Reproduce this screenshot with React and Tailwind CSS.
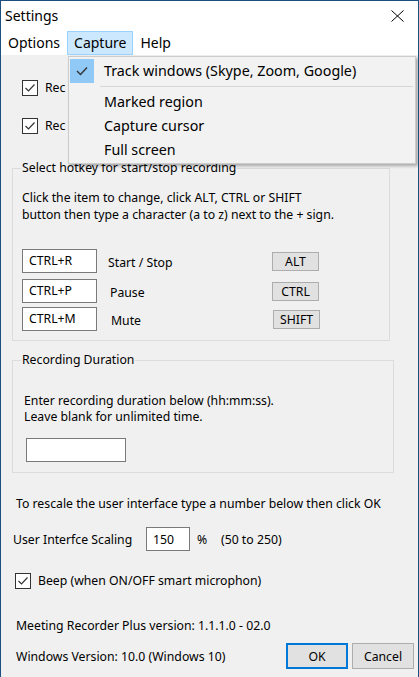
import React from "react";

function Check({ className = "" }) {
  return (
    <div className={"w-[16px] h-[16px] border border-[#333333] bg-white flex items-center justify-center shrink-0 " + className}>
      <svg width="12" height="10" viewBox="0 0 12 10">
        <path d="M1.5 5 L4.5 8 L10.5 1.5" fill="none" stroke="#333333" strokeWidth="1.2" />
      </svg>
    </div>
  );
}

function HotkeyRow({ keyText, label, labelMl, btn, mt }) {
  return (
    <div className={"flex items-center " + mt}>
      <div className="w-[75px] h-[24px] border border-[#7a7a7a] bg-white pl-[6px] pt-[2px] leading-[18px]">{keyText}</div>
      <div className={labelMl + " pt-[3px]"}>{label}</div>
      <div className="w-[47px] h-[19px] border border-[#adadad] bg-[#e1e1e1] flex items-center justify-center">{btn}</div>
    </div>
  );
}

export default function App() {
  return (
    <div className="relative w-[419px] h-[677px] overflow-hidden bg-[#f0f0f0] border-x border-t border-[#1b4f80] text-black font-['Noto_Sans',sans-serif] text-[12.25px] leading-[17px]">
      {/* Title bar */}
      <div className="h-[30px] bg-white flex items-center justify-between pl-[4px] pr-[14px]">
        <span className="text-[14px] leading-[20px]">Settings</span>
        <svg width="13" height="12" viewBox="0 0 13 12">
          <path d="M0.5 0.5 L12.5 11.5 M12.5 0.5 L0.5 11.5" stroke="#000" strokeWidth="1" fill="none" />
        </svg>
      </div>
      {/* Menu bar */}
      <div className="h-[24px] bg-white flex items-stretch text-[14px] leading-[20px] pl-[7px]">
        <div className="flex items-center">Options</div>
        <div className="ml-[7px] px-[6px] border border-[#99d1ff] bg-[#cce8ff] flex items-center">Capture</div>
        <div className="ml-[7px] flex items-center">Help</div>
      </div>

      {/* Body */}
      <div className="flex flex-col">
        <div className="flex items-center ml-[21px] mt-[24px]">
          <Check />
          <span className="ml-[7px]">Rec</span>
        </div>
        <div className="flex items-center ml-[21px] mt-[21px]">
          <Check />
          <span className="ml-[7px]">Rec</span>
        </div>

        <fieldset className="ml-[11px] w-[378px] mt-[26px] border border-[#dcdcdc] pl-[9px] pb-[9px]">
          <legend className="ml-[-1px] px-[1px] leading-[16px]">Select hotkey for start/stop recording</legend>
          <div className="mt-[13px]">
            Click the item to change, click ALT, CTRL or SHIFT
            <br />
            button then type a character (a to z) next to the + sign.
          </div>
          <HotkeyRow keyText="CTRL+R" label="Start / Stop" labelMl="ml-[11px] w-[164px]" btn="ALT" mt="mt-[26px]" />
          <HotkeyRow keyText="CTRL+P" label="Pause" labelMl="ml-[13px] w-[162px]" btn="CTRL" mt="mt-[6px]" />
          <HotkeyRow keyText="CTRL+M" label="Mute" labelMl="ml-[14px] w-[162px]" btn="SHIFT" mt="mt-[4px]" />
        </fieldset>

        <fieldset className="ml-[11px] w-[382px] mt-[11px] border border-[#dcdcdc] pl-[9px] pb-[10px]">
          <legend className="ml-[-1px] px-[1px] leading-[16px]">Recording Duration</legend>
          <div className="mt-[25px] ml-[2px] leading-[16px]">
            Enter recording duration below (hh:mm:ss).
            <br />
            Leave blank for unlimited time.
          </div>
          <div className="mt-[13px] ml-[4px] w-[100px] h-[24px] border border-[#7a7a7a] bg-white" />
        </fieldset>

        <div className="ml-[15px] mt-[22px]">To rescale the user interface type a number below then click OK</div>

        <div className="flex items-center mt-[15px] ml-[12px]">
          <span className="w-[133px]">User Interfce Scaling</span>
          <div className="w-[44px] h-[24px] border border-[#7a7a7a] bg-white pl-[6px] flex items-center">150</div>
          <span className="ml-[7px] w-[24px]">%</span>
          <span>(50 to 250)</span>
        </div>

        <div className="flex items-center mt-[21px] ml-[14px]">
          <Check />
          <span className="ml-[7px]">Beep (when ON/OFF smart microphon)</span>
        </div>

        <div className="ml-[15px] mt-[28px] whitespace-nowrap">Meeting Recorder Plus version: 1.1.1.0 - 02.0</div>

        <div className="flex items-center mt-[9px] ml-[15px]">
          <span className="w-[270px]">Windows Version: 10.0 (Windows 10)</span>
          <div className="w-[62px] h-[26px] border-2 border-[#0078d7] bg-[#e1e1e1] flex items-center justify-center">OK</div>
          <div className="ml-[4px] w-[62px] h-[26px] border border-[#adadad] bg-[#e1e1e1] flex items-center justify-center">Cancel</div>
        </div>
      </div>

      {/* Dropdown menu */}
      <div className="absolute left-[67px] top-[55px] w-[348px] border border-[#cccccc] bg-[#f2f2f2] pt-[2px] pb-[1px] text-[14.3px] leading-[20px] shadow-[2px_2px_3px_rgba(0,0,0,0.3)]">
        <div className="flex items-center h-[24px]">
          <div className="ml-[1px] w-[24px] h-[24px] bg-[#90c8f6] flex items-center justify-center">
            <svg width="12" height="10" viewBox="0 0 12 10">
              <path d="M1 5 L4.5 8.5 L11 1.5" fill="none" stroke="#333333" strokeWidth="1.4" />
            </svg>
          </div>
          <span className="ml-[10px]">Track windows (Skype, Zoom, Google)</span>
        </div>
        <div className="h-[7px] flex items-center pl-[31px] pr-[2px]">
          <div className="w-full h-[1px] bg-[#d7d7d7]" />
        </div>
        <div className="h-[24px] flex items-center pl-[35px]">Marked region</div>
        <div className="h-[24px] flex items-center pl-[35px]">Capture cursor</div>
        <div className="h-[24px] flex items-center pl-[35px]">Full screen</div>
      </div>
    </div>
  );
}
